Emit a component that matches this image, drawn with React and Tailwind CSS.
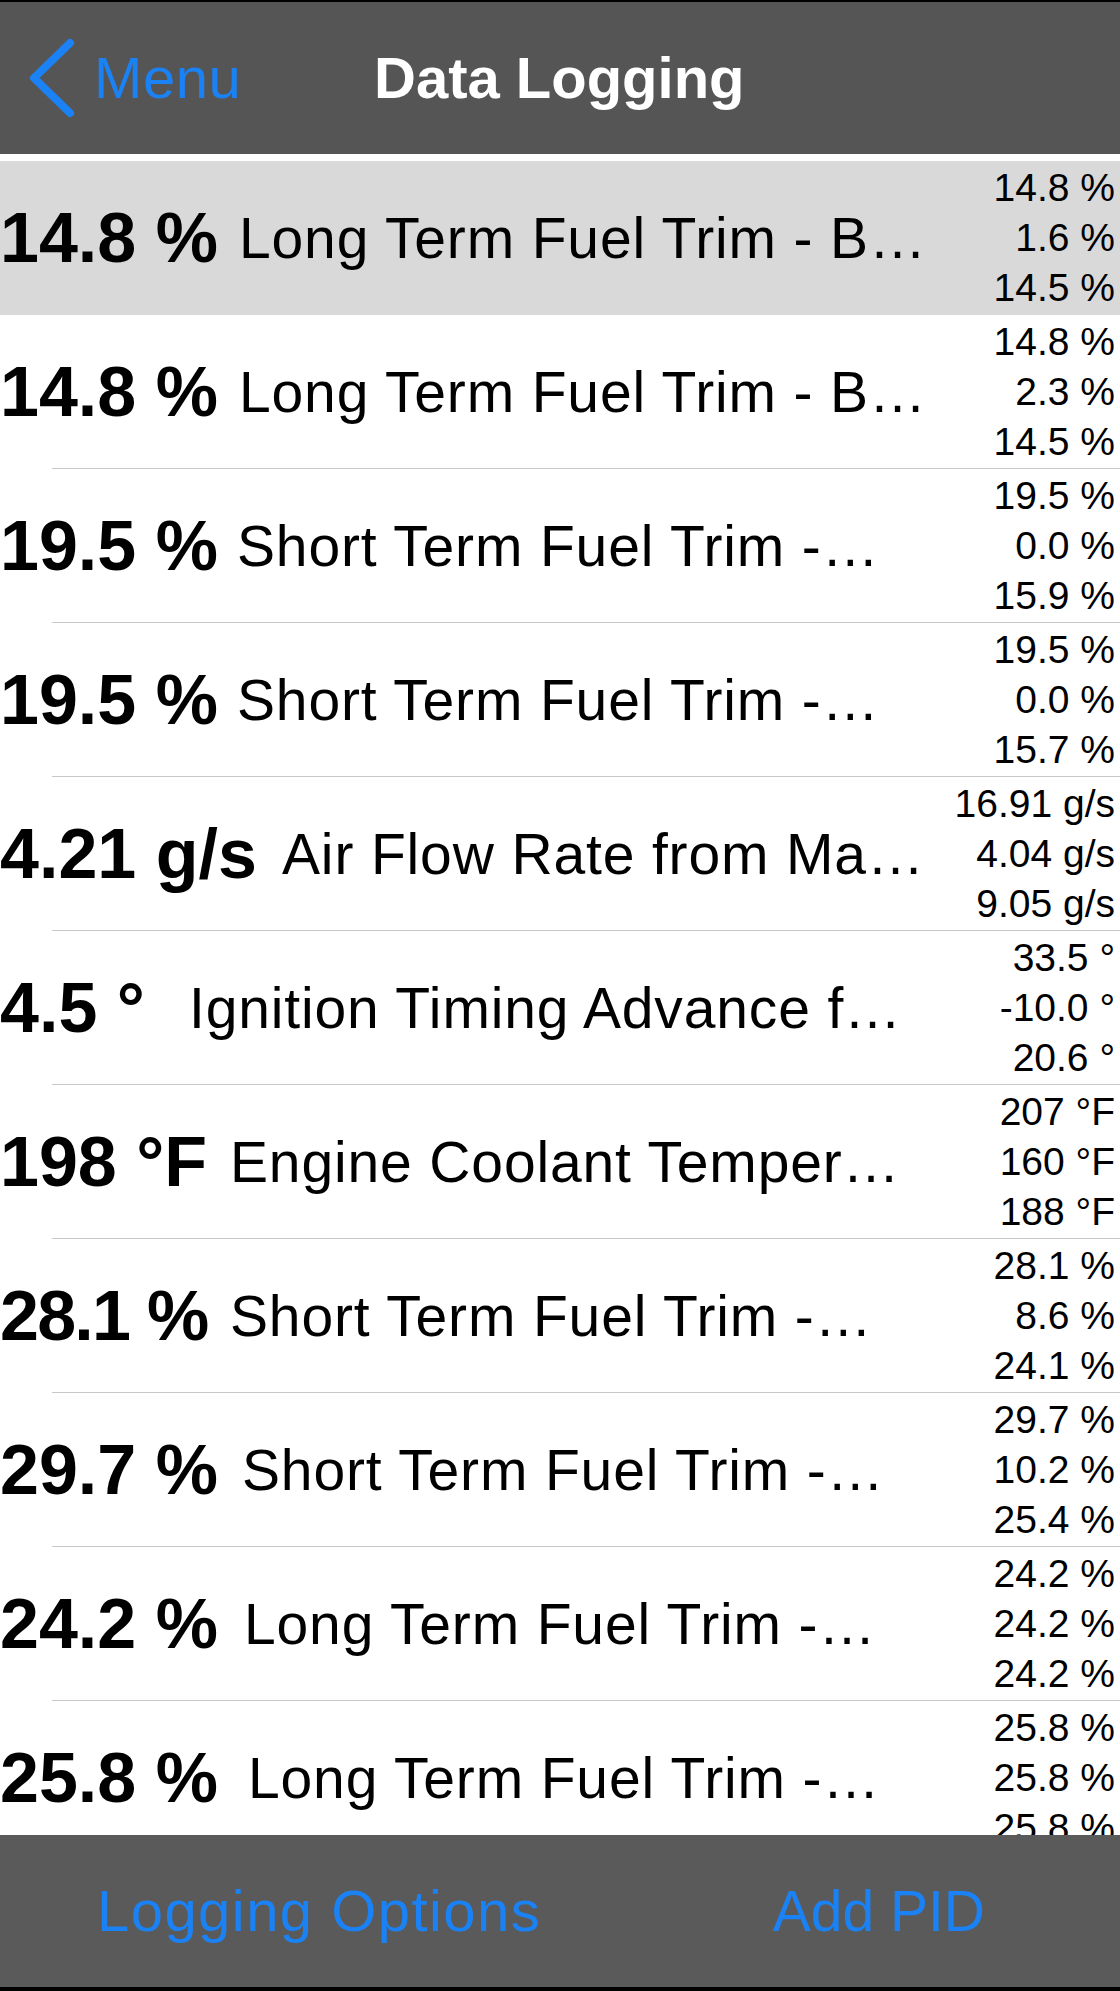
const rows = [
  { value: "14.8 %", w: "w-[239px]", label: "Long Term Fuel Trim - B…", stats: ["14.8 %", "1.6 %", "14.5 %"], active: true },
  { value: "14.8 %", w: "w-[239px]", label: "Long Term Fuel Trim - B…", stats: ["14.8 %", "2.3 %", "14.5 %"] },
  { value: "19.5 %", w: "w-[237px]", label: "Short Term Fuel Trim -…", stats: ["19.5 %", "0.0 %", "15.9 %"] },
  { value: "19.5 %", w: "w-[237px]", label: "Short Term Fuel Trim -…", stats: ["19.5 %", "0.0 %", "15.7 %"] },
  { value: "4.21 g/s", w: "w-[282px]", label: "Air Flow Rate from Ma…", stats: ["16.91 g/s", "4.04 g/s", "9.05 g/s"] },
  { value: "4.5 °", w: "w-[189px]", label: "Ignition Timing Advance f…", stats: ["33.5 °", "-10.0 °", "20.6 °"] },
  { value: "198 °F", w: "w-[230px]", label: "Engine Coolant Temper…", stats: ["207 °F", "160 °F", "188 °F"] },
  { value: "28.1 %", w: "w-[230px] tracking-[-0.025em]", label: "Short Term Fuel Trim -…", stats: ["28.1 %", "8.6 %", "24.1 %"] },
  { value: "29.7 %", w: "w-[242px]", label: "Short Term Fuel Trim -…", stats: ["29.7 %", "10.2 %", "25.4 %"] },
  { value: "24.2 %", w: "w-[244px]", label: "Long Term Fuel Trim -…", stats: ["24.2 %", "24.2 %", "24.2 %"] },
  { value: "25.8 %", w: "w-[248px]", label: "Long Term Fuel Trim -…", stats: ["25.8 %", "25.8 %", "25.8 %"] },
];

function Row({ row, last }) {
  return (
    <div className={`relative flex h-[154px] shrink-0 items-center ${row.active ? "bg-[#d9d9d9]" : "bg-white"}`}>
      <span className={`${row.w} shrink-0 whitespace-nowrap text-[70px] font-bold leading-none text-black`}>{row.value}</span>
      <span className="min-w-0 flex-1 overflow-hidden whitespace-nowrap text-[57px] leading-[1.3] tracking-[0.015em] text-black">{row.label}</span>
      <div className="flex shrink-0 flex-col items-end pr-[5px] text-[39px] leading-[50px] text-black">
        {row.stats.map((s, i) => (
          <span key={i} className="whitespace-nowrap">{s}</span>
        ))}
      </div>
      {!row.active && !last && <div className="absolute bottom-0 left-[52px] right-0 h-px bg-[#c8c8c8]" />}
    </div>
  );
}

export default function App() {
  return (
    <div className="flex h-[1991px] w-[1120px] flex-col overflow-hidden bg-black font-['Liberation_Sans',Arial,sans-serif]">
      <div className="h-[2px] shrink-0 bg-black" />
      <div className="flex h-[152px] shrink-0 items-center bg-[#555555]">
        <div className="flex w-[374px] shrink-0 items-center">
          <svg width="48" height="80" viewBox="0 0 48 80" className="ml-[28px] shrink-0">
            <polyline points="42,5 6,40 42,75" fill="none" stroke="#1a82f4" strokeWidth="8" strokeLinecap="round" strokeLinejoin="round" />
          </svg>
          <span className="ml-[18px] text-[58px] leading-none tracking-[0.01em] text-[#1a82f4]">Menu</span>
        </div>
        <span className="text-[58px] font-bold leading-none text-white">Data Logging</span>
      </div>
      <div className="flex min-h-0 flex-1 flex-col overflow-hidden bg-white pt-[7px]">
        {rows.map((row, i) => (
          <Row key={i} row={row} last={i === rows.length - 1} />
        ))}
      </div>
      <div className="flex h-[152px] shrink-0 items-center bg-[#5a5a5a]">
        <span className="ml-[97px] text-[58px] leading-none tracking-[0.025em] text-[#1a82f4]">Logging Options</span>
        <span className="ml-auto mr-[135px] text-[57px] leading-none text-[#1a82f4]">Add PID</span>
      </div>
      <div className="h-[4px] shrink-0 bg-black" />
    </div>
  );
}
